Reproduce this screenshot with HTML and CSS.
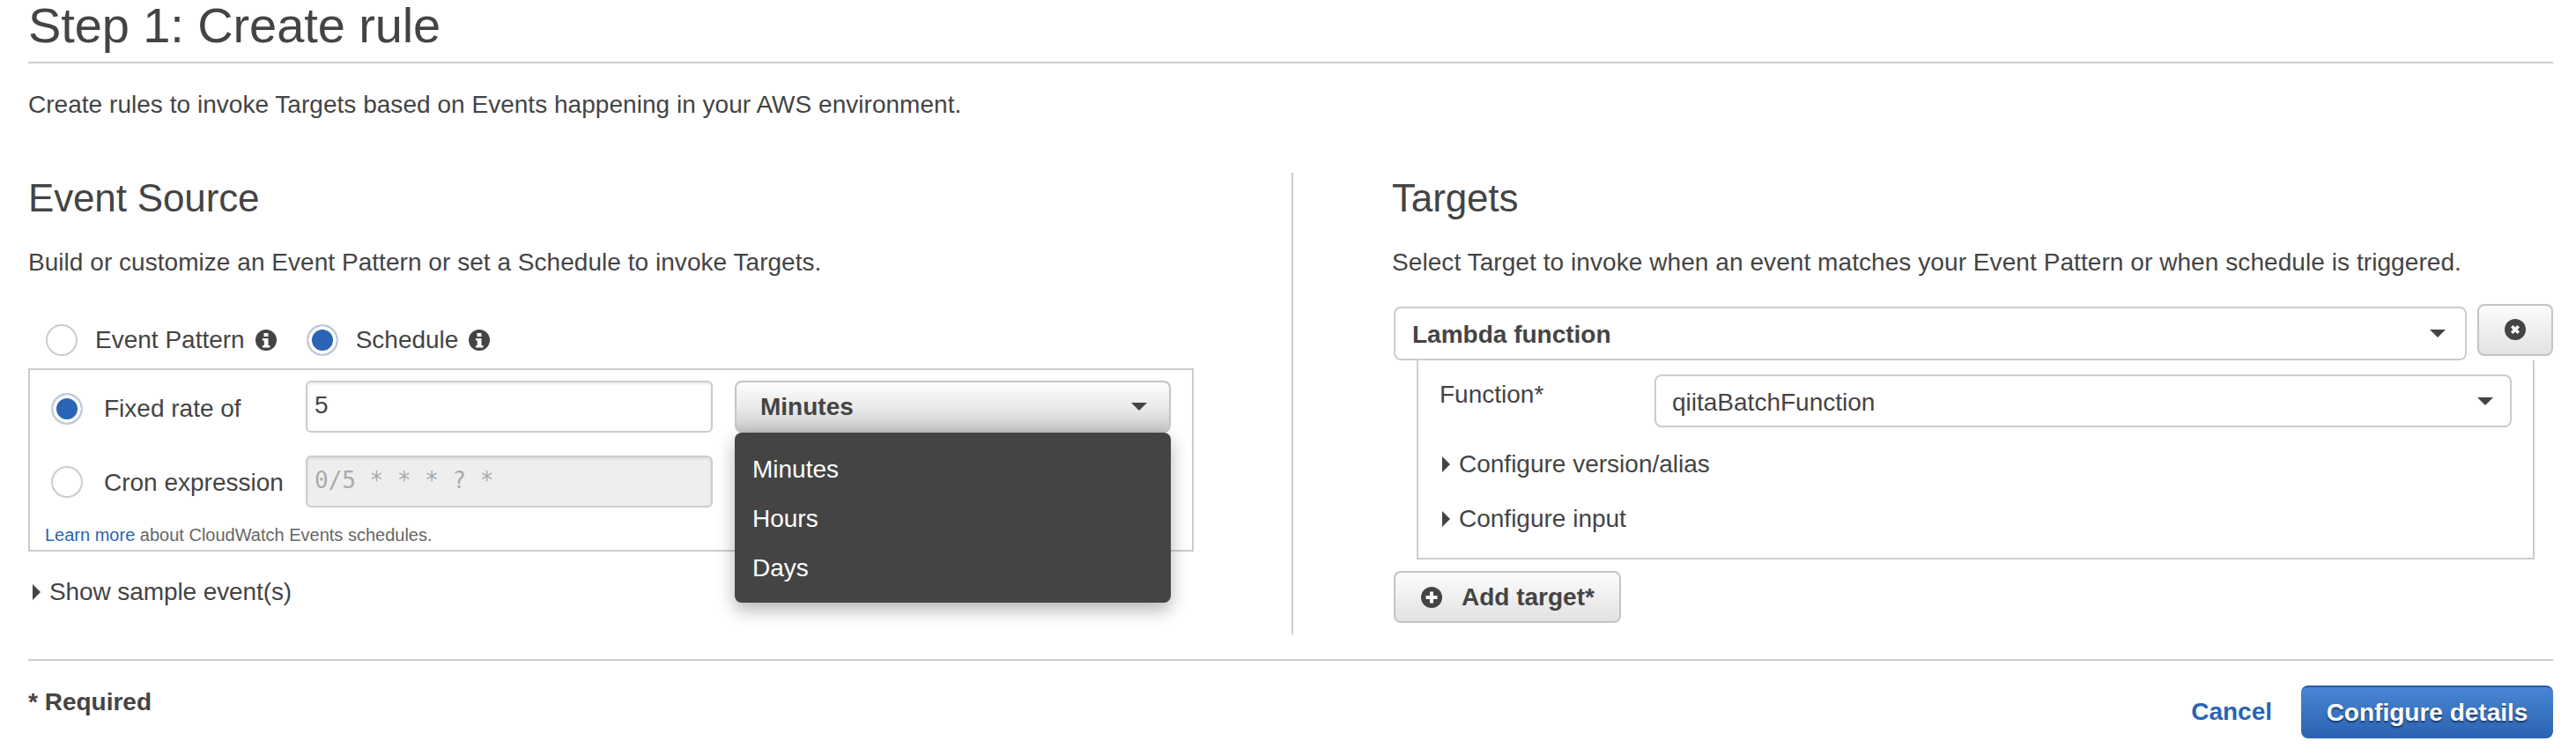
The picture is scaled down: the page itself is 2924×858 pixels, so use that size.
FILE: index.html
```html
<!DOCTYPE html>
<html lang="en">
<head>
    <meta charset="UTF-8">
    <meta name="viewport" content="width=device-width, initial-scale=1.0">
    <title>Step 1: Create rule</title>
    <link rel="stylesheet" href="styles.css">
</head>
<body>
  <div class="page">
    <h1 class="title">Step 1: Create rule</h1>
    <p class="intro">Create rules to invoke Targets based on Events happening in your AWS environment.</p>

    <div class="main">
        <!-- Event source -->
        <div class="source">
            <h2 class="section-title">Event Source</h2>
            <p class="section-text">Build or customize an Event Pattern or set a Schedule to invoke Targets.</p>

            <div class="type-row">
                <span class="radio"></span>
                <span class="type-label">Event Pattern</span>
                <svg class="info" viewBox="0 0 24 24"><circle cx="12" cy="12" r="12" fill="#444"/><rect x="9.5" y="4" width="5" height="4" fill="#fff"/><path d="M8 10h6.500v8H16.500v2.500H8V18h1.800v-5.500H8z" fill="#fff"/></svg>
                <span class="radio radio-on"></span>
                <span class="type-label">Schedule</span>
                <svg class="info" viewBox="0 0 24 24"><circle cx="12" cy="12" r="12" fill="#444"/><rect x="9.5" y="4" width="5" height="4" fill="#fff"/><path d="M8 10h6.500v8H16.500v2.500H8V18h1.800v-5.500H8z" fill="#fff"/></svg>
            </div>

            <div class="schedule-box">
                <div class="schedule-row fixed-row">
                    <span class="radio radio-on"></span>
                    <span class="schedule-label">Fixed rate of</span>
                    <input class="text-input" type="text" value="5">
                    <div class="unit-wrap">
                        <div class="unit-button"><span>Minutes</span><span class="caret"></span></div>
                        <div class="unit-menu">
                            <div class="unit-item">Minutes</div>
                            <div class="unit-item">Hours</div>
                            <div class="unit-item">Days</div>
                        </div>
                    </div>
                </div>
                <div class="schedule-row cron-row">
                    <span class="radio"></span>
                    <span class="schedule-label">Cron expression</span>
                    <input class="text-input cron-input" type="text" placeholder="0/5 * * * ? *" disabled>
                </div>
                <div class="learn"><a href="#">Learn more</a> about CloudWatch Events schedules.</div>
            </div>

            <div class="toggle sample"><span class="arrow"></span>Show sample event(s)</div>
        </div>

        <!-- Targets -->
        <div class="targets">
            <h2 class="section-title">Targets</h2>
            <p class="section-text">Select Target to invoke when an event matches your Event Pattern or when schedule is triggered.</p>

            <div class="target-head">
                <div class="select select-main"><b>Lambda function</b><span class="caret"></span></div>
                <button class="btn btn-remove" type="button">
                    <svg class="info" viewBox="0 0 24 24"><circle cx="12" cy="12" r="12" fill="#444"/><path d="M7 9.500l2.500-2.500L12 9.500 14.500 7 17 9.500 14.500 12l2.500 2.500-2.500 2.500L12 14.500 9.500 17 7 14.500 9.500 12z" fill="#fff"/></svg>
                </button>
            </div>

            <div class="target-box">
                <div class="function-row">
                    <label class="function-label">Function*</label>
                    <div class="select select-function"><span>qiitaBatchFunction</span><span class="caret"></span></div>
                </div>
                <div class="toggle"><span class="arrow"></span>Configure version/alias</div>
                <div class="toggle"><span class="arrow"></span>Configure input</div>
            </div>

            <button class="btn btn-add" type="button">
                <svg class="info" viewBox="0 0 24 24"><circle cx="12" cy="12" r="12" fill="#444"/><path d="M10 5.500h4V10h4.500v4H14v4.500h-4V14H5.500v-4H10z" fill="#fff"/></svg>
                Add target*
            </button>
        </div>
    </div>

    <div class="footer">
        <div class="required">* Required</div>
        <div class="actions">
            <a class="cancel" href="#">Cancel</a>
            <button class="btn-primary" type="button">Configure details</button>
        </div>
    </div>
  </div>
</body>
</html>
```

FILE: styles.css
```css
html, body {
    margin: 0;
    height: 858px;
    overflow: hidden;
    background: #fff;
}
body {
    font-family: "Liberation Sans", Arial, sans-serif;
    font-size: 28px;
    line-height: 40px;
    color: #444;
}
.page {
    padding: 0 26px 0 32px;
}
.title {
    margin: 0;
    padding-bottom: 12px;
    border-bottom: 2px solid #ccc;
    font-size: 56px;
    line-height: 58px;
    font-weight: normal;
    letter-spacing: -0.1px;
}
.intro {
    margin: 27px 0 0;
    letter-spacing: 0.03px;
}
.main {
    display: flex;
    margin-top: 57px;
}
.source {
    width: 1434px;
    flex-shrink: 0;
}
.targets {
    flex-grow: 1;
    border-left: 2px solid #ccc;
    padding: 0 0 13px 112px;
}
.section-title {
    margin: 0;
    font-size: 44px;
    line-height: 58px;
    font-weight: normal;
    letter-spacing: -0.15px;
}
.section-text {
    margin: 24px 0 0;
    letter-spacing: 0.07px;
}
.source .section-text {
    letter-spacing: 0.04px;
}

/* radios */
.radio {
    box-sizing: border-box;
    width: 36px;
    height: 36px;
    flex-shrink: 0;
    border: 2px solid #ccc;
    border-radius: 50%;
    background: #fff;
}
.radio-on {
    border-color: #c4ccd8;
    background: #2a64b4;
    box-shadow: inset 0 0 0 4px #fff;
}
.info {
    width: 24px;
    height: 24px;
    flex-shrink: 0;
}
.type-row {
    display: flex;
    align-items: center;
    height: 36px;
    margin-top: 50px;
    padding-left: 20px;
}
.type-label {
    margin-left: 20px;
    margin-right: 12px;
}
.type-row .info + .radio {
    margin-left: 34px;
}

/* schedule box */
.schedule-box {
    box-sizing: border-box;
    width: 1323px;
    height: 208px;
    margin-top: 14px;
    padding: 12px 0 0 24px;
    border: 2px solid #ccc;
}
.schedule-row {
    display: flex;
    align-items: center;
    height: 59px;
}
.fixed-row .radio, .fixed-row .schedule-label {
    margin-top: 4px;
}
.cron-row {
    margin-top: 26px;
}
.cron-row .schedule-label {
    margin-top: 2px;
}
.schedule-label {
    width: 229px;
    margin-left: 24px;
    flex-shrink: 0;
}
.text-input {
    box-sizing: border-box;
    width: 462px;
    height: 59px;
    padding: 0 8px 4px;
    border: 2px solid #ccc;
    border-radius: 6px;
    background: #fff;
    box-shadow: inset 0 2px 3px rgba(0, 0, 0, 0.08);
    font-family: "Liberation Sans", Arial, sans-serif;
    font-size: 28px;
    color: #444;
}
.cron-input {
    background: #eee;
    font-family: "DejaVu Sans Mono", monospace;
    font-size: 26px;
}
.cron-input::placeholder {
    color: #aaa;
    opacity: 1;
}
.unit-wrap {
    position: relative;
    width: 495px;
    margin-left: 25px;
}
.unit-button {
    box-sizing: border-box;
    display: flex;
    justify-content: space-between;
    align-items: center;
    height: 59px;
    padding: 0 25px 0 27px;
    border: 2px solid #c4c4c4;
    border-radius: 8px;
    background: linear-gradient(#fefefe, #e6e6e6 60%, #c8c8c8);
    font-weight: bold;
}
.caret {
    width: 0;
    height: 0;
    border-left: 9px solid transparent;
    border-right: 9px solid transparent;
    border-top: 9px solid #444;
}
.unit-menu {
    position: absolute;
    top: 59px;
    left: 0;
    width: 100%;
    height: 193px;
    padding-top: 14px;
    box-sizing: border-box;
    border-radius: 8px;
    background: #444;
    box-shadow: 0 8px 20px rgba(0, 0, 0, 0.3);
    z-index: 5;
}
.unit-item {
    height: 56px;
    padding-left: 20px;
    line-height: 56px;
    color: #fff;
}
.learn {
    margin: 18px 0 0 -7px;
    font-size: 20px;
    line-height: 26px;
    color: #666;
}
.learn a, .cancel {
    color: #2a64b4;
    text-decoration: none;
}

/* expanders */
.toggle {
    display: flex;
    align-items: center;
}
.arrow {
    width: 0;
    height: 0;
    margin-right: 10px;
    border-top: 9px solid transparent;
    border-bottom: 9px solid transparent;
    border-left: 9px solid #444;
}
.sample {
    margin: 26px 0 0 5px;
    letter-spacing: -0.1px;
}

/* targets */
.target-head {
    display: flex;
    align-items: flex-start;
    gap: 12px;
    height: 61px;
    margin: 30px 0 0 2px;
}
.select {
    box-sizing: border-box;
    display: flex;
    justify-content: space-between;
    align-items: center;
    border: 2px solid #ccc;
    border-radius: 8px;
    background: #fff;
}
.select-main {
    width: 1218px;
    height: 61px;
    padding: 3px 22px 0 19px;
}
.select-main .caret, .select-function .caret {
    margin-top: -3px;
}
.select-function {
    width: 973px;
    height: 60px;
    padding: 3px 19px 0 18px;
}
.btn {
    box-sizing: border-box;
    display: flex;
    align-items: center;
    border: 2px solid #c4c4c4;
    border-radius: 8px;
    background: linear-gradient(#fcfcfc, #e2e2e2);
    font-family: "Liberation Sans", Arial, sans-serif;
    font-size: 28px;
    font-weight: bold;
    color: #444;
}
.btn-remove {
    justify-content: center;
    width: 86px;
    height: 59px;
    margin-top: -3px;
    padding: 0 0 2px;
}
.target-box {
    box-sizing: border-box;
    width: 1269px;
    height: 226px;
    margin-left: 28px;
    padding: 16px 24px 0;
    border: 2px solid #ccc;
    border-top: 0;
}
.function-row {
    display: flex;
    align-items: flex-start;
    margin-bottom: 22px;
}
.function-label {
    width: 244px;
    padding-top: 3px;
    flex-shrink: 0;
}
.target-box .toggle {
    margin: 22px 0 0 3px;
}
.btn-add {
    gap: 22px;
    width: 258px;
    height: 59px;
    margin: 13px 0 0 2px;
    padding: 0 0 0 29px;
}

/* footer */
.footer {
    display: flex;
    justify-content: space-between;
    align-items: flex-start;
    margin-top: 28px;
    border-top: 2px solid #ccc;
}
.required {
    margin-top: 27px;
    font-weight: bold;
}
.actions {
    display: flex;
    align-items: center;
    gap: 33px;
    margin-top: 28px;
}
.cancel {
    font-weight: bold;
}
.btn-primary {
    width: 286px;
    height: 60px;
    padding: 0;
    border: 0;
    border-top: 2px solid #2459a4;
    border-radius: 8px;
    background: linear-gradient(#4a86d6, #2a62b0);
    font-family: "Liberation Sans", Arial, sans-serif;
    font-size: 28px;
    font-weight: bold;
    color: #fff;
    text-shadow: 0 2px 2px rgba(0, 0, 0, 0.5);
}
```
